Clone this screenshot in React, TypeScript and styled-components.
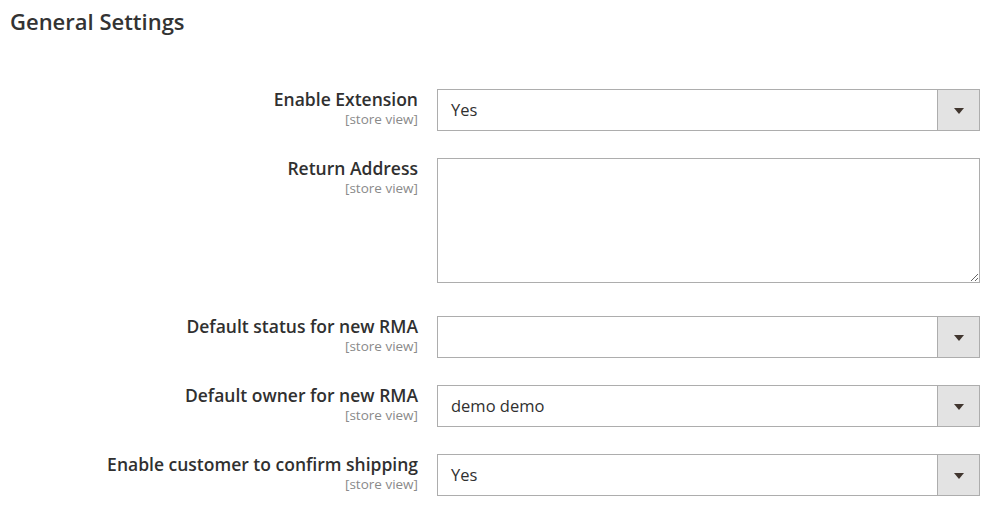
import React from "react";
import styled, { createGlobalStyle } from "styled-components";

const Global = createGlobalStyle`
  html, body { margin: 0; padding: 0; background: #fff; }
  body { font-family: "Open Sans", "Liberation Sans", sans-serif; color: #303030; }
  * { box-sizing: border-box; }
`;

const Page = styled.div`
  padding: 6px 13px 0 10px;
  width: 993px;
`;

const Title = styled.h2`
  margin: 0;
  font-size: 22px;
  line-height: 30px;
  font-weight: 600;
  color: #333;
`;

const Form = styled.div`
  margin-top: 53px;
  display: flex;
  flex-direction: column;
  gap: 27px;
`;

const Row = styled.div<{ $extra?: number }>`
  display: grid;
  grid-template-columns: 408px 543px;
  column-gap: 19px;
  align-items: start;
  padding-bottom: ${(p) => p.$extra ?? 0}px;
`;

const LabelCol = styled.div`
  text-align: right;
`;

const Label = styled.div`
  font-size: 17.5px;
  line-height: 21px;
  font-weight: 600;
  color: #303030;
`;

const Scope = styled.div`
  font-size: 13.5px;
  line-height: 18px;
  color: #8a8a8a;
`;

const Select = styled.div`
  height: 42px;
  border: 1px solid #adadad;
  display: flex;
  align-items: stretch;
  background: #fff;
`;

const Value = styled.div`
  flex: 1;
  padding-left: 13px;
  font-size: 16.5px;
  line-height: 40px;
  color: #303030;
`;

const Addon = styled.div`
  width: 42px;
  border-left: 1px solid #adadad;
  background: #e3e3e3;
  display: flex;
  align-items: center;
  justify-content: center;
`;

const Arrow = styled.span`
  width: 0;
  height: 0;
  border-left: 5px solid transparent;
  border-right: 5px solid transparent;
  border-top: 6px solid #41362f;
  margin-top: 1px;
`;

const TextArea = styled.textarea`
  display: block;
  width: 543px;
  height: 125px;
  border: 1px solid #adadad;
  border-radius: 0;
  font-family: inherit;
  font-size: 16px;
  padding: 8px 13px;
  margin: 0;
  outline: none;
`;

type Field = { label: string; value?: string; kind: "select" | "textarea" };

const fields: Field[] = [
  { label: "Enable Extension", value: "Yes", kind: "select" },
  { label: "Return Address", kind: "textarea" },
  { label: "Default status for new RMA", value: "", kind: "select" },
  { label: "Default owner for new RMA", value: "demo demo", kind: "select" },
  { label: "Enable customer to confirm shipping", value: "Yes", kind: "select" },
];

export default function App() {
  return (
    <Page>
      <Global />
      <Title>General Settings</Title>
      <Form>
        {fields.map((f) => (
          <Row key={f.label} $extra={f.kind === "textarea" ? 6 : 0}>
            <LabelCol>
              <Label>{f.label}</Label>
              <Scope>[store view]</Scope>
            </LabelCol>
            {f.kind === "select" ? (
              <Select>
                <Value>{f.value}</Value>
                <Addon>
                  <Arrow />
                </Addon>
              </Select>
            ) : (
              <TextArea defaultValue="" />
            )}
          </Row>
        ))}
      </Form>
    </Page>
  );
}
